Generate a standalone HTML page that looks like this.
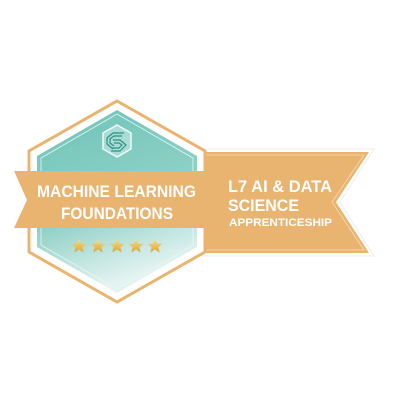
<!DOCTYPE html>
<html><head><meta charset="utf-8"><style>
html,body{margin:0;padding:0;background:#fff;width:400px;height:400px;overflow:hidden}
svg{display:block}
text{font-family:"Liberation Sans",sans-serif;font-weight:bold;fill:#fff}
</style></head><body>
<svg width="400" height="400" viewBox="0 0 400 400">
<defs>
<linearGradient id="tg" x1="0" y1="0" x2="0.3" y2="1">
<stop offset="0" stop-color="#6ec4b8"/><stop offset="0.6" stop-color="#8fd0c6"/><stop offset="1" stop-color="#e3f3f1"/>
</linearGradient>
<linearGradient id="sg" x1="0" y1="0" x2="0" y2="1">
<stop offset="0" stop-color="#f7e08a"/><stop offset="1" stop-color="#d9a53a"/>
</linearGradient>
<path id="star" d="M0,-7.5 L2.2,-2.4 7.5,-2.3 3.4,1.1 4.7,6.5 0,3.5 -4.7,6.5 -3.4,1.1 -7.5,-2.3 -2.2,-2.4Z"/>
</defs>
<polygon points="200,149 374,149 340,202 374,256 200,256" fill="#fff" stroke="#eeeeee" stroke-width="1"/>
<polygon points="202,152 369,152 336,202 369,253 202,253" fill="#e9b46f"/>
<polygon points="204,155 364,155 332,202 364,250 204,250" fill="none" stroke="#f6dbb4" stroke-width="0.8"/>
<polygon points="117,101 205,151 205,252 117,302 29,252 29,151" fill="#fff" stroke="#e9b46f" stroke-width="3"/>
<polygon points="117,110 197,156 197,247 117,293 37,247 37,156" fill="url(#tg)"/>
<polygon points="117,114 193,158 193,245 117,289 41,245 41,158" fill="none" stroke="#e8f6f4" stroke-width="0.8"/>
<!-- logo -->
<polygon points="117,125 131,133 131,149 117,157 103,149 103,133" fill="#a8ddd5" stroke="#f0fbf9" stroke-width="1.5"/>
<g fill="none" stroke="#2e8f85" stroke-width="1.2" stroke-linejoin="round">
<path d="M124,133 L113,133 L107,138 L107,144 L113,149"/>
<path d="M122,136 L114,136 L110,139 L110,143 L114,146"/>
<path d="M113,140 L120,140 L126,145 L120,151 L111,151"/>
<path d="M114,143 L119,143 L122,145 L119,148 L112,148"/>
</g>
<polygon points="14,171 208,171 208,228 14,228 27,200" fill="#e9b46f"/>
<text x="37" y="197" font-size="17" textLength="159" lengthAdjust="spacingAndGlyphs">MACHINE LEARNING</text>
<text x="61" y="219" font-size="17" textLength="112" lengthAdjust="spacingAndGlyphs">FOUNDATIONS</text>
<g fill="url(#sg)">
<use href="#star" x="79" y="246"/><use href="#star" x="98" y="246"/><use href="#star" x="117" y="246"/><use href="#star" x="136" y="246"/><use href="#star" x="155" y="246"/>
</g>
<text x="228" y="192" font-size="17" textLength="104" lengthAdjust="spacingAndGlyphs">L7 AI &amp; DATA</text>
<text x="228" y="211" font-size="17" textLength="71" lengthAdjust="spacingAndGlyphs">SCIENCE</text>
<text x="229" y="226" font-size="11" textLength="103" lengthAdjust="spacingAndGlyphs">APPRENTICESHIP</text>
</svg>
</body></html>
